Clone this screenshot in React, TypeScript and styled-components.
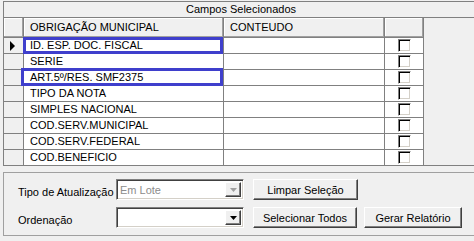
import React from 'react';
import styled, { createGlobalStyle } from 'styled-components';

const GlobalStyle = createGlobalStyle`
  body {
    margin: 0;
    background: #f0f0f0;
    overflow: hidden;
    font-family: 'Liberation Sans', Arial, sans-serif;
    font-size: 11px;
    color: #000;
  }
`;

const Page = styled.div`
  width: 474px;
  height: 241px;
  overflow: hidden;
`;

const FieldsPanel = styled.section`
  margin: 1px 0 0 3px;
  width: 474px;
  border-top: 1px solid #808080;
  border-left: 1px solid #808080;
  border-bottom: 1px solid #808080;
`;

const PanelTitle = styled.div`
  height: 15px;
  line-height: 15px;
  text-align: center;
  border-bottom: 1px solid #808080;
`;

const GridArea = styled.div`
  position: relative;
`;

const GridRow = styled.div`
  display: grid;
  grid-template-columns: 20px 200px 161px 39px;
`;

const Cell = styled.div<{ $kind: 'indicator' | 'text' | 'check'; $header?: boolean; $last?: boolean }>`
  height: ${(p) => (p.$header ? '19px' : '15px')};
  border-right: 1px solid #808080;
  border-bottom: ${(p) => (p.$last ? 'none' : '1px solid #808080')};
  background: ${(p) => (p.$header || p.$kind === 'indicator' ? '#f0f0f0' : '#fff')};
  box-shadow: ${(p) => (p.$header ? 'inset -1px -1px 0 #a0a0a0, inset 1px 1px 0 #fff' : 'none')};
  padding-left: ${(p) => (p.$kind === 'text' ? '6px' : '0')};
  line-height: ${(p) => (p.$header ? '19px' : '15px')};
  display: flex;
  align-items: center;
  justify-content: ${(p) => (p.$kind === 'text' ? 'flex-start' : 'center')};
  white-space: nowrap;
  overflow: hidden;
`;

const Pointer = styled.svg`
  width: 6px;
  height: 10px;
  margin-left: -2px;
`;

const CheckBox = styled.span`
  width: 11px;
  height: 11px;
  background: #fff;
  border: 1px solid;
  border-color: #808080 #fff #fff #808080;
  box-shadow: inset 1px 1px 0 #000, inset -1px -1px 0 #d4d0c8;
`;

const Highlight = styled.span<{ $left: number; $top: number; $width: number; $height: number }>`
  position: absolute;
  left: ${(p) => p.$left}px;
  top: ${(p) => p.$top}px;
  width: ${(p) => p.$width}px;
  height: ${(p) => p.$height}px;
  box-sizing: border-box;
  border: 3px solid #3f3fcc;
  pointer-events: none;
`;

const OptionsPanel = styled.section`
  margin: 6px 0 0 3px;
  width: 474px;
  height: 64px;
  border-top: 1px solid #a0a0a0;
  border-left: 1px solid #a0a0a0;
  border-bottom: 1px solid #a0a0a0;
  padding: 6px 0 0 14px;
  box-sizing: border-box;
  display: flex;
  flex-direction: column;
  gap: 7px;
`;

const OptionRow = styled.div`
  display: flex;
  align-items: center;
  height: 21px;
`;

const Label = styled.span`
  width: 98px;
  padding-top: 4px;
  white-space: nowrap;
`;

const Combo = styled.div<{ $disabled?: boolean }>`
  width: 128px;
  height: 21px;
  box-sizing: border-box;
  background: #fff;
  border: 1px solid;
  border-color: #808080 #fff #fff #808080;
  box-shadow: inset 1px 1px 0 #404040, inset -1px -1px 0 #d4d0c8;
  display: flex;
  align-items: center;
  padding: 0 2px 0 3px;
  color: ${(p) => (p.$disabled ? '#8c8c8c' : '#000')};
`;

const ComboText = styled.span`
  flex: 1;
  white-space: nowrap;
`;

const ComboArrow = styled.span`
  width: 16px;
  height: 15px;
  box-sizing: border-box;
  background: #f0f0f0;
  border: 1px solid;
  border-color: #fff #404040 #404040 #fff;
  box-shadow: inset -1px -1px 0 #808080;
  display: flex;
  align-items: center;
  justify-content: center;
`;

const Button = styled.button<{ $width: number; $gap: number }>`
  width: ${(p) => p.$width}px;
  height: 21px;
  margin-left: ${(p) => p.$gap}px;
  padding: 0;
  font: inherit;
  color: #000;
  background: #f0f0f0;
  border: 1px solid;
  border-color: #fff #404040 #404040 #fff;
  box-shadow: inset -1px -1px 0 #808080;
`;

const fields = [
  'ID. ESP. DOC. FISCAL',
  'SERIE',
  'ART.5º/RES. SMF2375',
  'TIPO DA NOTA',
  'SIMPLES NACIONAL',
  'COD.SERV.MUNICIPAL',
  'COD.SERV.FEDERAL',
  'COD.BENEFICIO',
];

const Arrow = ({ color }: { color: string }) => (
  <svg width="7" height="4" viewBox="0 0 7 4">
    <polygon points="0,0 7,0 3.5,4" fill={color} />
  </svg>
);

const App = () => (
  <Page>
    <GlobalStyle />
    <FieldsPanel>
      <PanelTitle>Campos Selecionados</PanelTitle>
      <GridArea>
        <GridRow>
          <Cell $kind='indicator' $header />
          <Cell $kind='text' $header>OBRIGAÇÃO MUNICIPAL</Cell>
          <Cell $kind='text' $header>CONTEUDO</Cell>
          <Cell $kind='check' $header />
        </GridRow>
        {fields.map((field, i) => (
          <GridRow key={field}>
            <Cell $kind='indicator' $last={i === fields.length - 1}>
              {i === 0 && (
                <Pointer viewBox="0 0 6 10">
                  <polygon points="0,0 5,5 0,10" fill="#000" />
                </Pointer>
              )}
            </Cell>
            <Cell $kind='text' $last={i === fields.length - 1}>{field}</Cell>
            <Cell $kind='text' $last={i === fields.length - 1} />
            <Cell $kind='check' $last={i === fields.length - 1}>
              <CheckBox />
            </Cell>
          </GridRow>
        ))}
        <Highlight $left={19} $top={19} $width={200} $height={17} />
        <Highlight $left={17} $top={50} $width={202} $height={18} />
      </GridArea>
    </FieldsPanel>
    <OptionsPanel>
      <OptionRow>
        <Label>Tipo de Atualização</Label>
        <Combo $disabled>
          <ComboText>Em Lote</ComboText>
          <ComboArrow>
            <Arrow color='#a0a0a0' />
          </ComboArrow>
        </Combo>
        <Button $width={105} $gap={9}>Limpar Seleção</Button>
      </OptionRow>
      <OptionRow>
        <Label>Ordenação</Label>
        <Combo>
          <ComboText />
          <ComboArrow>
            <Arrow color='#000' />
          </ComboArrow>
        </Combo>
        <Button $width={104} $gap={9}>Selecionar Todos</Button>
        <Button $width={98} $gap={7}>Gerar Relatório</Button>
      </OptionRow>
    </OptionsPanel>
  </Page>
);

export default App;
